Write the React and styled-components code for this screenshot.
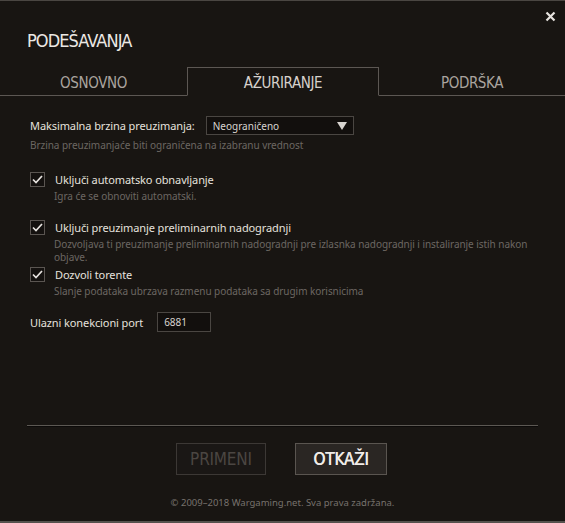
import React, { Component } from 'react';
import styled, { createGlobalStyle } from 'styled-components';

const GlobalStyle = createGlobalStyle`
  html, body {
    margin: 0;
    padding: 0;
    background: #181512;
  }
`;

const condensed = `"Liberation Sans Narrow", "DejaVu Sans Condensed", sans-serif`;
const text = `"Noto Sans", "DejaVu Sans", sans-serif`;

const Window = styled.div`
  position: relative;
  width: 565px;
  height: 523px;
  box-sizing: border-box;
  background: #181512;
  border-top: 1px solid #4a4642;
  border-bottom: 2px solid #55514d;
  display: flex;
  flex-direction: column;
  font-family: ${text};
`;

const Close = styled.button`
  position: absolute;
  top: 6px;
  right: 6px;
  width: 18px;
  height: 18px;
  padding: 0;
  border: 0;
  background: none;
  cursor: pointer;
  display: flex;
  align-items: center;
  justify-content: center;
`;

const Title = styled.h1`
  margin: 0;
  padding: 30px 0 0 27px;
  font-family: ${condensed};
  font-weight: normal;
  font-size: 18px;
  letter-spacing: -0.9px;
  line-height: 20px;
  color: #ece8e4;
`;

const TabBar = styled.div`
  display: flex;
  margin-top: 16px;
  height: 29px;
`;

const Tab = styled.div`
  box-sizing: border-box;
  width: ${p => p.w}px;
  flex: ${p => (p.grow ? 1 : 'none')};
  display: flex;
  align-items: center;
  justify-content: center;
  padding-top: 2px;
  font-family: ${condensed};
  font-size: 15px;
  letter-spacing: -0.4px;
  color: ${p => (p.active ? '#d6d1cc' : '#aaa49f')};
  border-bottom: ${p => (p.active ? '1px solid transparent' : '1px solid #5c5753')};
  border-top: ${p => (p.active ? '1px solid #5c5753' : '1px solid transparent')};
  border-left: ${p => (p.active ? '1px solid #5c5753' : '0')};
  border-right: ${p => (p.active ? '1px solid #5c5753' : '0')};
`;

const Content = styled.div`
  flex: 1;
  padding: 20px 18px 0 30px;
  display: flex;
  flex-direction: column;
`;

const Row = styled.div`
  display: flex;
  align-items: center;
  gap: ${p => p.gap || 10}px;
  font-size: 11px;
  letter-spacing: -0.1px;
  color: #e6e2de;
`;

const Select = styled.div`
  box-sizing: border-box;
  width: 148px;
  height: 19px;
  border: 1px solid #4a4642;
  background: #120f0d;
  display: flex;
  align-items: center;
  justify-content: space-between;
  padding: 0 6px 0 6px;
  font-size: 10px;
  letter-spacing: 0;
  color: #d8d4d0;
`;

const Arrow = styled.span`
  width: 0;
  height: 0;
  border-left: 5px solid transparent;
  border-right: 5px solid transparent;
  border-top: 8px solid #d8d4d0;
`;

const Hint = styled.div`
  font-size: 10px;
  line-height: 13px;
  letter-spacing: -0.05px;
  color: #6c6762;
  margin: ${p => p.m || '5px 0 0 0'};
  padding-left: ${p => p.indent || 0}px;
`;

const Option = styled.div`
  margin-top: ${p => p.top}px;
`;

const Box = styled.span`
  box-sizing: border-box;
  width: 15px;
  height: 15px;
  border: 1px solid #5a5551;
  background: #14110f;
  display: flex;
  align-items: center;
  justify-content: center;
  flex: none;
`;

const Input = styled.div`
  box-sizing: border-box;
  width: 54px;
  height: 20px;
  border: 1px solid #4a4642;
  background: #120f0d;
  padding-left: 6px;
  display: flex;
  align-items: center;
  font-size: 10px;
  letter-spacing: 0;
  color: #d8d4d0;
`;

const Footer = styled.div`
  display: flex;
  flex-direction: column;
  align-items: center;
`;

const Separator = styled.div`
  align-self: stretch;
  margin: 0 27px;
  height: 1px;
  background: #5c5853;
  box-shadow: 0 1px 0 #0c0a09;
`;

const Buttons = styled.div`
  display: flex;
  gap: 29px;
  margin-top: 17px;
  padding-right: 2px;
`;

const Button = styled.button`
  box-sizing: border-box;
  width: ${p => p.w}px;
  height: 32px;
  font-family: ${condensed};
  font-size: 17px;
  font-weight: normal;
  letter-spacing: -0.2px;
  color: ${p => (p.disabled ? '#4b4642' : '#f0ece8')};
  text-shadow: ${p => (p.disabled ? 'none' : '0.4px 0 0 #f0ece8')};
  background: ${p => (p.disabled ? '#1a1715' : '#2a2623')};
  border: 1px solid ${p => (p.disabled ? '#3c3835' : '#5a5550')};
  padding: 0;
`;

const Copy = styled.div`
  margin: 21px 0 12px 0;
  font-size: 9.5px;
  color: #77726d;
`;

const Check = () => (
  <svg width="11" height="9" viewBox="0 0 11 9">
    <path d="M1 4.5 L4 7.5 L10 1" fill="none" stroke="#e8e4e0" strokeWidth="1.7" />
  </svg>
);

class App extends Component {
  render() {
    return (
      <Window>
        <GlobalStyle />
        <Close>
          <svg width="11" height="11" viewBox="0 0 11 11">
            <path d="M1.5 1.5 L9.5 9.5 M9.5 1.5 L1.5 9.5" stroke="#e8e4e0" strokeWidth="2.2" />
          </svg>
        </Close>
        <Title>PODEŠAVANJA</Title>
        <TabBar>
          <Tab w={187}>OSNOVNO</Tab>
          <Tab w={192} active>AŽURIRANJE</Tab>
          <Tab grow>PODRŠKA</Tab>
        </TabBar>
        <Content>
          <Row gap={11}>
            <span>Maksimalna brzina preuzimanja:</span>
            <Select>
              <span>Neograničeno</span>
              <Arrow />
            </Select>
          </Row>
          <Hint m="4px 0 0 0">Brzina preuzimanjaće biti ograničena na izabranu vrednost</Hint>

          <Option top={20}>
            <Row><Box><Check /></Box><span>Uključi automatsko obnavljanje</span></Row>
            <Hint indent={24} m="3px 0 0 0">Igra će se obnoviti automatski.</Hint>
          </Option>

          <Option top={17}>
            <Row><Box><Check /></Box><span>Uključi preuzimanje preliminarnih nadogradnji</span></Row>
            <Hint indent={24} m="3px 0 0 0">Dozvoljava ti preuzimanje preliminarnih nadogradnji pre izlasnka nadogradnji i instaliranje istih nakon objave.</Hint>
          </Option>

          <Option top={3}>
            <Row><Box><Check /></Box><span>Dozvoli torente</span></Row>
            <Hint indent={24} m="3px 0 0 0">Slanje podataka ubrzava razmenu podataka sa drugim korisnicima</Hint>
          </Option>

          <Option top={14}>
            <Row gap={14}>
              <span>Ulazni konekcioni port</span>
              <Input>6881</Input>
            </Row>
          </Option>
        </Content>
        <Footer>
          <Separator />
          <Buttons>
            <Button w={90} disabled>PRIMENI</Button>
            <Button w={92}>OTKAŽI</Button>
          </Buttons>
          <Copy>© 2009–2018 Wargaming.net. Sva prava zadržana.</Copy>
        </Footer>
      </Window>
    );
  }
}

export default App;
